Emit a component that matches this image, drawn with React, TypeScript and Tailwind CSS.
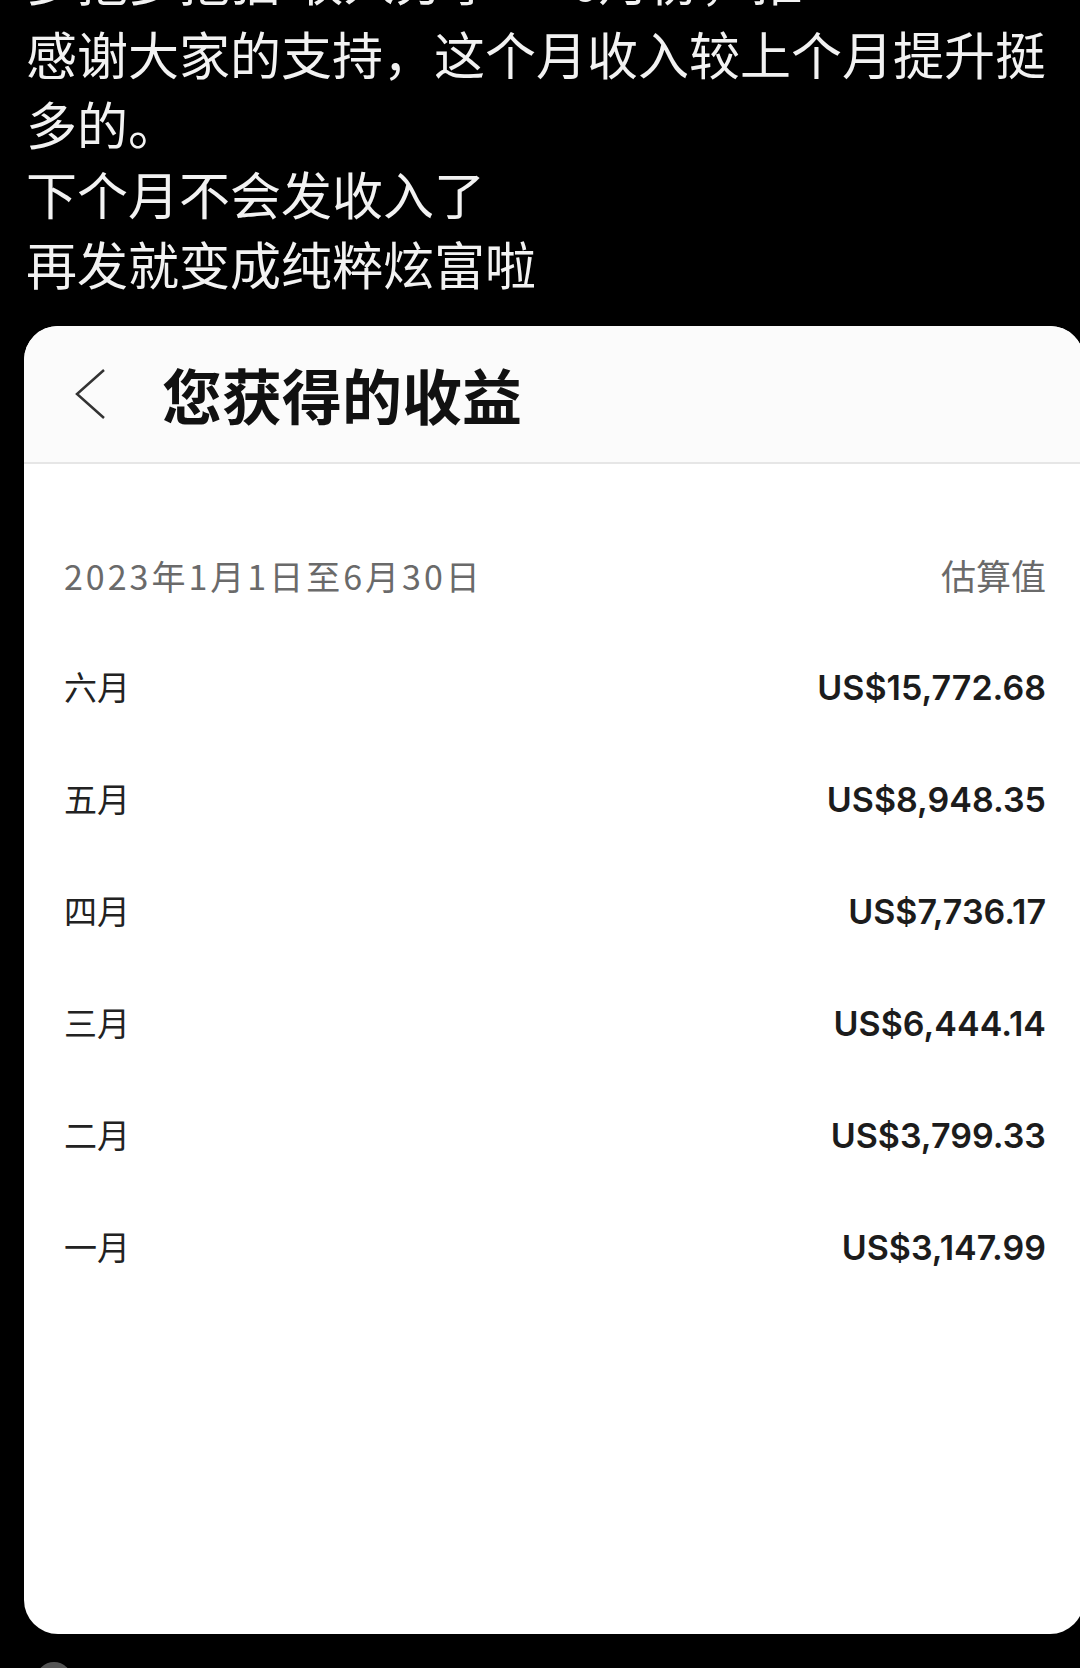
import React from "react";

const cjk = { fontFamily: '"Noto Sans CJK SC", "Noto Sans", sans-serif' };
const num = { fontFamily: 'Inter, "Noto Sans CJK SC", sans-serif' };

const rows: [string, string][] = [
  ["六月", "US$15,772.68"],
  ["五月", "US$8,948.35"],
  ["四月", "US$7,736.17"],
  ["三月", "US$6,444.14"],
  ["二月", "US$3,799.33"],
  ["一月", "US$3,147.99"],
];

export default function App() {
  return (
    <div className="w-[1080px] h-[1668px] overflow-hidden bg-black relative" style={cjk}>
      <div className="pl-[26px] mt-[-56px] text-[51px] leading-[70px] text-[#f2f2f2] whitespace-nowrap">
        <div>多抱多抱猫 收入分享 · 6月份，推</div>
        <div className="mt-[4px]">感谢大家的支持，这个月收入较上个月提升挺</div>
        <div>多的。</div>
        <div>下个月不会发收入了</div>
        <div>再发就变成纯粹炫富啦</div>
      </div>

      <div className="mt-[28px] ml-[24px] w-[1060px] h-[1308px] bg-white rounded-[34px] overflow-hidden flex flex-col">
        <div className="h-[136px] bg-[#fbfbfb] flex items-center shrink-0">
          <svg width="32" height="52" viewBox="0 0 32 52" className="ml-[51px]">
            <polyline points="29,2 2,26 29,50" fill="none" stroke="#333" strokeWidth="2.5" strokeLinejoin="miter" />
          </svg>
          <div className="ml-[55px] text-[60px] font-bold text-[#111] leading-none">您获得的收益</div>
        </div>
        <div className="h-[2px] bg-[#e6e6e6] shrink-0" />
        <div className="pt-[56px] pl-[40px] pr-[38px]">
          <div className="h-[111px] flex items-center justify-between text-[34px] text-[#6a6a6a]">
            <span className="tracking-[3px]">2023年1月1日至6月30日</span>
            <span className="text-[35px]">估算值</span>
          </div>
          {rows.map(([m, v]) => (
            <div key={m} className="h-[112px] flex items-center justify-between">
              <span className="text-[33px] text-[#222]">{m}</span>
              <span className="text-[34px] font-semibold text-[#1c1c1c]" style={num}>
                {v}
              </span>
            </div>
          ))}
        </div>
      </div>

      <div className="absolute left-[36px] top-[1662px] w-[36px] h-[36px] rounded-full bg-[#555]" />
    </div>
  );
}
